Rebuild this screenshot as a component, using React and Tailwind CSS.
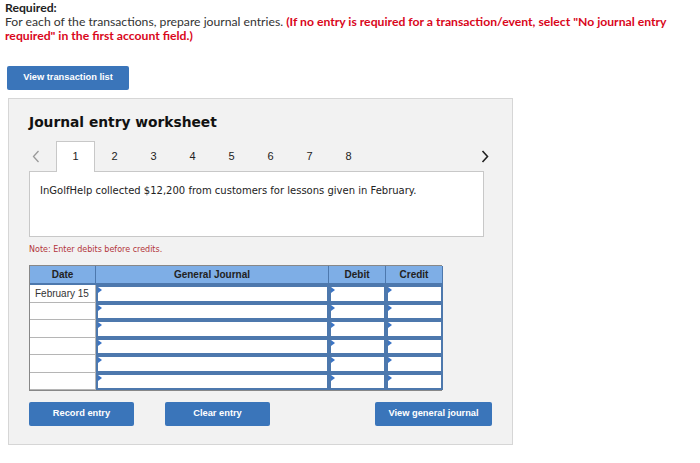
import { Fragment } from 'react'

const tabs = [1, 2, 3, 4, 5, 6, 7, 8]
const rows = ['February 15', '', '', '', '', '']

function InputCell() {
  return (
    <div className="relative h-full border-2 border-[#4d78ad] bg-white">
      <span className="absolute left-0 top-0 h-0 w-0 border-y-[3px] border-l-[4px] border-y-transparent border-l-[#3b74c4]" />
    </div>
  )
}

function BlueButton({ children, className }) {
  return (
    <button
      className={`h-[24px] rounded-[2px] bg-[#3a75ba] font-['Liberation_Sans',Arial,sans-serif] text-[9.3px] font-bold text-white ${className}`}
    >
      {children}
    </button>
  )
}

function App() {
  return (
    <div className="min-h-[463px] bg-white pl-[5px] pt-px">
      <div className="w-[680px] font-['Lato','Liberation_Sans',sans-serif] text-[12.2px] leading-[14px] text-[#333]">
        <p className="font-bold text-[#222]">Required:</p>
        <p>
          For each of the transactions, prepare journal entries.{' '}
          <span className="font-bold text-[#d9061b]">
            (If no entry is required for a transaction/event, select "No journal entry required" in the first
            account field.)
          </span>
        </p>
      </div>

      <BlueButton className="ml-[2px] mt-[23px] w-[122px]">View transaction list</BlueButton>

      <div className="ml-[3px] mt-[8px] h-[347px] w-[505px] border border-[#d6d6d6] bg-[#f2f2f2] pl-[20px] pt-[14px]">
        <h2 className="font-['DejaVu_Sans',Verdana,sans-serif] text-[13.8px] font-bold leading-[18px] text-[#111]">
          Journal entry worksheet
        </h2>

        <div className="mt-[10px] flex h-[30px] w-[460px] items-end font-['Liberation_Sans',Arial,sans-serif] text-[11px] text-[#222]">
          <span className="flex h-[29px] w-[27px] items-center pl-[3px] text-[#999]">
            <svg width="8" height="13" viewBox="0 0 8 13">
              <path d="M6.5 1 1.5 6.5 6.5 12" fill="none" stroke="#9a9a9a" strokeWidth="1.3" />
            </svg>
          </span>
          {tabs.map((t) => (
            <span
              key={t}
              className={
                t === 1
                  ? 'relative z-10 -mb-px flex h-[31px] w-[39px] items-center justify-center border border-b-0 border-[#c8c8c8] bg-white pb-px'
                  : 'flex h-[29px] w-[39px] items-center justify-center'
              }
            >
              {t}
            </span>
          ))}
          <span className="ml-auto flex h-[29px] items-center">
            <svg width="8" height="13" viewBox="0 0 8 13">
              <path d="M1.5 1 6.5 6.5 1.5 12" fill="none" stroke="#222" strokeWidth="1.6" />
            </svg>
          </span>
        </div>

        <div className="h-[66px] w-[455px] border border-[#c8c8c8] bg-white pl-[10px] pt-[11px] font-['DejaVu_Sans',Verdana,sans-serif] text-[10px] text-[#222]">
          InGolfHelp collected $12,200 from customers for lessons given in February.
        </div>

        <p className="mt-[7px] font-['DejaVu_Sans',Verdana,sans-serif] text-[8px] leading-[12px] text-[#b3353a]">
          Note: Enter debits before credits.
        </p>

        <div className="mt-[9px] grid w-[413px] grid-cols-[66px_233px_57px_57px] grid-rows-[19px_repeat(6,17.5px)] border border-[#888] font-['Liberation_Sans',Arial,sans-serif]">
          {['Date', 'General Journal', 'Debit', 'Credit'].map((h) => (
            <div
              key={h}
              className="flex items-center justify-center border-b-2 border-r border-b-[#4d78ad] border-r-[#4d78ad] bg-[#7eaee6] text-[10px] font-bold text-[#222] last:border-r-0"
            >
              {h}
            </div>
          ))}
          {rows.map((d, i) => (
            <Fragment key={i}>
              <div className="flex items-center border-b border-r border-[#b5b5b5] bg-white pl-[5px] text-[10px] text-[#333]">
                {d}
              </div>
              <InputCell />
              <InputCell />
              <InputCell />
            </Fragment>
          ))}
        </div>

        <div className="mt-[11px] flex w-[463px]">
          <BlueButton className="w-[105px]">Record entry</BlueButton>
          <BlueButton className="ml-[31px] w-[105px]">Clear entry</BlueButton>
          <BlueButton className="ml-auto w-[117px]">View general journal</BlueButton>
        </div>
      </div>
    </div>
  )
}

export default App
